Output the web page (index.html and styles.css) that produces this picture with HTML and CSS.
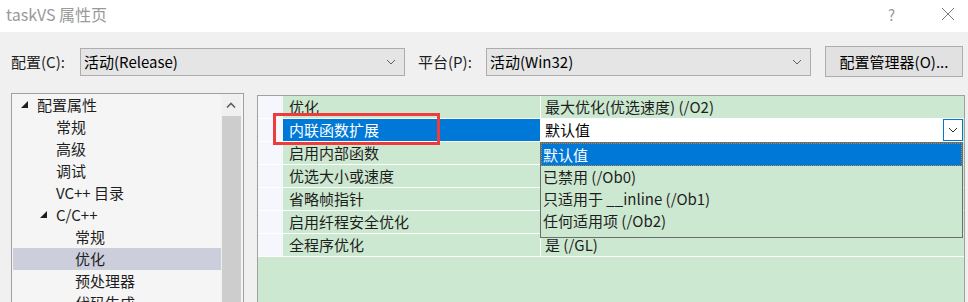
FILE: index.html
```html
<!DOCTYPE html>
<html>
	<head>
		<meta charset="utf-8">
		<title>taskVS 属性页</title>
		<link rel="stylesheet" href="styles.css">
	</head>
	<body>
		<div class="titlebar">
			<span class="title">taskVS 属性页</span>
			<span class="help">?</span>
			<svg class="close" width="14" height="14" viewBox="0 0 14 14"><path d="M1 1L13 13M13 1L1 13" stroke="#7a7a7a" stroke-width="1" fill="none"/></svg>
		</div>

		<div class="toolbar">
			<span class="lbl lbl-conf">配置(C):</span>
			<div class="combo">
				<span>活动(Release)</span>
				<svg width="10" height="6" viewBox="0 0 10 6"><path d="M1 1L5 5L9 1" stroke="#606060" fill="none"/></svg>
			</div>
			<span class="lbl lbl-plat">平台(P):</span>
			<div class="combo">
				<span>活动(Win32)</span>
				<svg width="10" height="6" viewBox="0 0 10 6"><path d="M1 1L5 5L9 1" stroke="#606060" fill="none"/></svg>
			</div>
			<div class="btn">配置管理器(O)...</div>
		</div>

		<div class="main">
			<div class="tree">
				<ul class="nodes">
					<li class="lv0"><i class="tri"><svg width="7" height="7" viewBox="0 0 7 7"><path d="M7 0V7H0Z" fill="#1e1e1e"/></svg></i>配置属性</li>
					<li class="lv1"><i class="tri"></i>常规</li>
					<li class="lv1"><i class="tri"></i>高级</li>
					<li class="lv1"><i class="tri"></i>调试</li>
					<li class="lv1"><i class="tri"></i>VC++ 目录</li>
					<li class="lv1"><i class="tri"><svg width="7" height="7" viewBox="0 0 7 7"><path d="M7 0V7H0Z" fill="#1e1e1e"/></svg></i>C/C++</li>
					<li class="lv2"><i class="tri"></i>常规</li>
					<li class="lv2 sel"><i class="tri"></i>优化</li>
					<li class="lv2"><i class="tri"></i>预处理器</li>
					<li class="lv2"><i class="tri"></i>代码生成</li>
				</ul>
				<div class="vscroll">
					<div class="up"><svg width="10" height="6" viewBox="0 0 10 6"><path d="M1 5.5L5 1.5L9 5.5" stroke="#606060" stroke-width="1.6" fill="none"/></svg></div>
					<div class="thumb"></div>
				</div>
			</div>

			<div class="grid">
				<div class="row">
					<div class="gut"></div>
					<div class="name">优化</div>
					<div class="val">最大优化(优选速度) (/O2)</div>
				</div>
				<div class="row active">
					<div class="gut"></div>
					<div class="name">内联函数扩展</div>
					<div class="val">
						<span>默认值</span>
						<div class="drop"><svg width="10" height="6" viewBox="0 0 10 6"><path d="M1 1L5 5L9 1" stroke="#333" fill="none"/></svg></div>
					</div>
				</div>
				<div class="row">
					<div class="gut"></div>
					<div class="name">启用内部函数</div>
					<div class="val"></div>
				</div>
				<div class="row">
					<div class="gut"></div>
					<div class="name">优选大小或速度</div>
					<div class="val"></div>
				</div>
				<div class="row">
					<div class="gut"></div>
					<div class="name">省略帧指针</div>
					<div class="val"></div>
				</div>
				<div class="row">
					<div class="gut"></div>
					<div class="name">启用纤程安全优化</div>
					<div class="val"></div>
				</div>
				<div class="row">
					<div class="gut"></div>
					<div class="name">全程序优化</div>
					<div class="val">是 (/GL)</div>
				</div>

				<ul class="options">
					<li class="hot">默认值</li>
					<li>已禁用 (/Ob0)</li>
					<li>只适用于 __inline (/Ob1)</li>
					<li>任何适用项 (/Ob2)</li>
				</ul>
			</div>
		</div>

		<div class="mark"></div>
	</body>
</html>
```

FILE: styles.css
```css
html,
body {
	margin: 0;
	padding: 0;
}

body {
	width: 968px;
	height: 302px;
	overflow: hidden;
	position: relative;
	background: #f0f0f0;
	font-family: "Noto Sans CJK SC", "Noto Sans", sans-serif;
	font-size: 15px;
	color: #1e1e1e;
}

ul,
li {
	margin: 0;
	padding: 0;
	list-style: none;
}

.titlebar {
	height: 32px;
	background: #fff;
	display: flex;
	align-items: center;
	padding-left: 6px;
	padding-bottom: 4px;
	box-sizing: border-box;
}

.title {
	color: #999;
	font-size: 16px;
	flex: 1;
}

.help {
	color: #999;
	font-size: 15px;
	margin-right: 46px;
}

.close {
	margin-right: 13px;
}

.toolbar {
	height: 45px;
	padding-top: 14px;
	padding-left: 11px;
	box-sizing: border-box;
	display: flex;
	align-items: center;
}

.lbl {
	line-height: 28px;
}

.lbl-conf {
	width: 69px;
}

.lbl-plat {
	margin-left: 13px;
	width: 68px;
}

.combo {
	width: 325px;
	height: 28px;
	box-sizing: border-box;
	border: 1px solid #adadad;
	background: #e5e5e5;
	display: flex;
	align-items: center;
	justify-content: space-between;
	padding: 0 8px 0 3px;
	color: #000;
}

.btn {
	margin-left: 14px;
	width: 138px;
	height: 31px;
	box-sizing: border-box;
	border: 1px solid #adadad;
	background: #e1e1e1;
	display: flex;
	align-items: center;
	justify-content: center;
	color: #000;
}

.main {
	display: flex;
	margin-top: 16px;
	padding-left: 11px;
	height: 209px;
	overflow: hidden;
}

.tree {
	width: 233px;
	height: 230px;
	box-sizing: border-box;
	border: 1px solid #a0a0a0;
	background: #f5f5f5;
	display: flex;
	padding-left: 1px;
}

.nodes {
	width: 208px;
}

.nodes li {
	height: 22px;
	line-height: 22px;
	display: flex;
	align-items: center;
	white-space: nowrap;
	color: #1e1e1e;
}

.nodes .lv0 {
	padding-left: 8px;
}

.nodes .lv1 {
	padding-left: 27px;
}

.nodes .lv2 {
	padding-left: 46px;
}

.nodes .sel {
	background: #cccedb;
}

.tri {
	width: 16px;
	height: 22px;
	display: flex;
	align-items: center;
	padding-bottom: 2px;
	box-sizing: border-box;
}

.vscroll {
	width: 20px;
	background: #f0f0f0;
	display: flex;
	flex-direction: column;
}

.up {
	height: 22px;
	display: flex;
	align-items: center;
	justify-content: center;
}

.thumb {
	flex: 1;
	margin-left: 1px;
	background: #cdcdcd;
}

.grid {
	position: relative;
	margin-left: 13px;
	margin-top: 2px;
	width: 708px;
	height: 240px;
	box-sizing: border-box;
	border: 1px solid #a0a0a0;
	background: #cde8d0;
}

.row {
	display: flex;
	height: 23px;
	box-sizing: border-box;
	border-bottom: 1px solid #fff;
	line-height: 22px;
}

.gut {
	width: 25px;
	background: #f5f7fc;
}

.name {
	width: 257px;
	padding-left: 6px;
	box-sizing: border-box;
	color: #1e1e1e;
}

.val {
	flex: 1;
	border-left: 1px solid #fff;
	padding-left: 4px;
	margin-right: 1px;
	display: flex;
	justify-content: space-between;
	color: #1e1e1e;
}

.active .name {
	background: #0078d7;
	color: #fff;
}

.active .val {
	background: #fff;
	color: #000;
	padding-right: 0;
}

.drop {
	width: 20px;
	height: 22px;
	box-sizing: border-box;
	border: 1px solid #0078d7;
	display: flex;
	align-items: center;
	justify-content: center;
}

.options {
	position: absolute;
	left: 282px;
	top: 46px;
	width: 423px;
	height: 96px;
	box-sizing: border-box;
	border: 1px solid #6e6e6e;
	background: #cde8d0;
}

.options li {
	height: 22px;
	line-height: 22px;
	padding-left: 2px;
	color: #1e1e1e;
	white-space: nowrap;
}

.options .hot {
	height: 23px;
	background: #0078d7;
	color: #fff;
	border: 1px dotted #c8842c;
	box-sizing: border-box;
	padding-left: 1px;
	line-height: 21px;
}

.mark {
	position: absolute;
	left: 273px;
	top: 113px;
	width: 167px;
	height: 32px;
	box-sizing: border-box;
	border: 3px solid #ee3b3b;
}
```
